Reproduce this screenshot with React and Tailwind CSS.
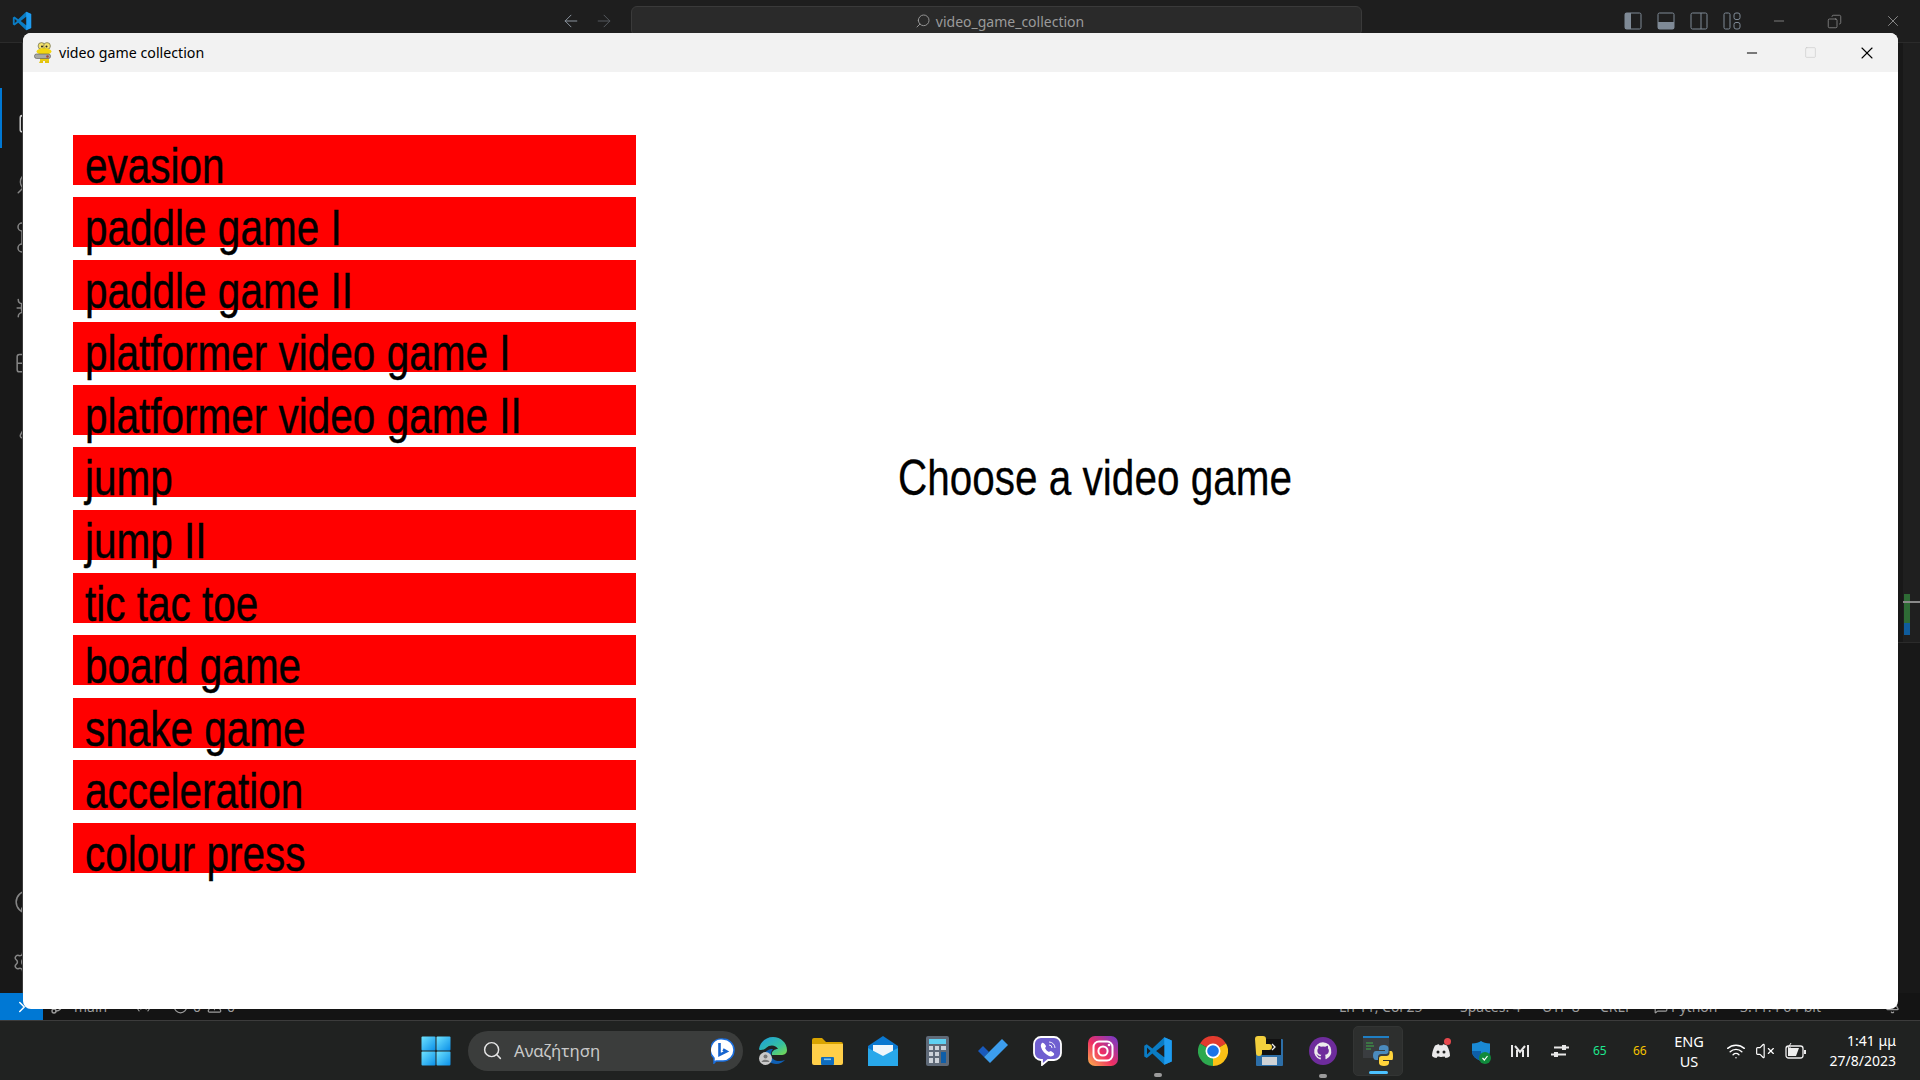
import { ArrowLeft, ArrowRight, Search, Minus, X, Square, Copy, Wifi, VolumeX, ChevronRight, GitBranch, Bell, CircleUser, Settings, Files, Bug, Blocks, FlaskConical, CircleX, TriangleAlert, Radio, MessageSquare } from 'lucide-react'

const games = [
  'evasion',
  'paddle game I',
  'paddle game II',
  'platformer video game I',
  'platformer video game II',
  'jump',
  'jump II',
  'tic tac toe',
  'board game',
  'snake game',
  'acceleration',
  'colour press',
]

function VscodeLogo({ size }) {
  return (
    <svg width={size} height={size} viewBox="0 0 24 24">
      <path d="M17 1 7.500 10 3 6.500 1 7.700v8.600L3 17.500 7.500 14l9.500 9 6-2.600V3.600z" fill="#0a7cc4" />
      <path d="M17 1 23 3.600v16.800L17 23z" fill="#1f9cf0" />
      <path d="M17 7v10l-6.500-5z" fill="#1f1f1f" />
      <path d="M3.200 9.200 6 12l-2.800 2.800z" fill="#1f1f1f" />
    </svg>
  )
}

function PygameIcon() {
  return (
    <svg width="19" height="21" viewBox="0 0 19 21">
      <circle cx="7.500" cy="4" r="3.400" fill="#f4e26b" stroke="#6a6a50" strokeWidth="0.7" />
      <circle cx="13" cy="4" r="3.400" fill="#f4e26b" stroke="#6a6a50" strokeWidth="0.7" />
      <circle cx="8" cy="4.500" r="1" fill="#222" />
      <circle cx="12.500" cy="4.500" r="1" fill="#222" />
      <ellipse cx="10" cy="9.500" rx="7.500" ry="3.300" fill="#f2d60f" />
      <path d="M6 12h9v7H6z" fill="#eacb10" />
      <rect x="0.500" y="12" width="16" height="4.500" rx="2" fill="#a9a9a2" stroke="#555" strokeWidth="0.6" />
      <circle cx="13.500" cy="14.500" r="1.300" fill="#a04b3a" />
      <path d="M6 19h3v2H5zM11 19h4v2h-4z" fill="#e2c30f" />
    </svg>
  )
}

function LayoutIcons() {
  return (
    <div className="flex items-center gap-[15px]">
      <svg width="18" height="18" viewBox="0 0 18 18"><rect x="1" y="1" width="16" height="16" rx="1.500" fill="none" stroke="#7f8a96" /><rect x="1" y="1" width="6" height="16" fill="#7f8a96" /></svg>
      <svg width="18" height="18" viewBox="0 0 18 18"><rect x="1" y="1" width="16" height="16" rx="1.500" fill="none" stroke="#7f8a96" /><rect x="1" y="10" width="16" height="7" fill="#7f8a96" /></svg>
      <svg width="18" height="18" viewBox="0 0 18 18"><rect x="1" y="1" width="16" height="16" rx="1.500" fill="none" stroke="#7f8a96" /><path d="M11 1v16" stroke="#7f8a96" /></svg>
      <svg width="18" height="18" viewBox="0 0 18 18" fill="none" stroke="#7f8a96"><rect x="1" y="1" width="6" height="16" rx="1.500" /><rect x="11" y="1" width="6" height="6.500" rx="2" /><rect x="11" y="10.500" width="6" height="6.500" rx="2" /></svg>
    </div>
  )
}

function TaskbarIcons() {
  return (
    <>
      {/* start */}
      <svg width="30" height="30" viewBox="0 0 30 30" className="ml-[421px] shrink-0">
        <defs>
          <linearGradient id="win" x1="0" y1="0" x2="1" y2="1"><stop offset="0" stopColor="#6fe3ff" /><stop offset="1" stopColor="#0a8fe8" /></linearGradient>
        </defs>
        <rect x="0.500" y="0.500" width="14" height="14" rx="1" fill="url(#win)" />
        <rect x="15.500" y="0.500" width="14" height="14" rx="1" fill="url(#win)" />
        <rect x="0.500" y="15.500" width="14" height="14" rx="1" fill="url(#win)" />
        <rect x="15.500" y="15.500" width="14" height="14" rx="1" fill="url(#win)" />
      </svg>
      {/* search */}
      <div className="ml-[17px] flex h-[40px] w-[275px] shrink-0 items-center rounded-full bg-[#3b3d3c] pl-[14px] pr-2">
        <Search size={21} strokeWidth={1.7} className="text-[#e4e4e4]" />
        <span className="ml-[11px] flex-1 text-[16.800px] text-[#c9c9c9]">Αναζήτηση</span>
        <svg width="24" height="26" viewBox="0 0 24 26">
          <path d="M12 1a11 11 0 0 1 0 22H5l-2 2v-5A11 11 0 0 1 12 1z" fill="#fff" stroke="#1a6fe0" strokeWidth="1.500" />
          <path d="M8.500 5v12l7-3.500-3.500-2" fill="none" stroke="#1765cf" strokeWidth="2.600" />
        </svg>
      </div>
      {/* edge */}
      <svg width="30" height="30" viewBox="0 0 30 30" className="ml-[15px] shrink-0">
        <defs>
          <linearGradient id="edge" x1="0" y1="0" x2="1" y2="1"><stop offset="0" stopColor="#1b9de2" /><stop offset="0.600" stopColor="#35c1a0" /><stop offset="1" stopColor="#7ddb4a" /></linearGradient>
        </defs>
        <path d="M15 1c8 0 14 6 14 13 0 4-3 5-6 5h-9c-1-3 2-6 6-6-2-4-8-5-12-1-2 2-7 3-7 1C2 6 8 1 15 1z" fill="url(#edge)" />
        <path d="M7 18c0 6 6 10 11 10 4 0 7-2 9-4-5 2-10 1-12-1-3-3-2-8 0-10-4 0-8 2-8 5z" fill="#0f5fb3" />
        <circle cx="7.500" cy="22.500" r="6.500" fill="#c9c9c9" />
        <circle cx="7.500" cy="20.500" r="2" fill="#777" />
        <path d="M3.500 26c1-3 7-3 8 0z" fill="#777" />
      </svg>
      {/* explorer */}
      <svg width="31" height="28" viewBox="0 0 31 28" className="ml-[24px] shrink-0">
        <path d="M0 3a2 2 0 0 1 2-2h8l4 4h15a2 2 0 0 1 2 2v3H0z" fill="#d9a400" />
        <path d="M0 7h31v19a2 2 0 0 1-2 2H2a2 2 0 0 1-2-2z" fill="#ffcf49" />
        <rect x="9" y="20" width="13" height="8" rx="1" fill="#0f6cbd" />
        <rect x="12" y="21.500" width="7" height="1.600" fill="#7cc4f5" />
      </svg>
      {/* mail */}
      <svg width="30" height="30" viewBox="0 0 30 30" className="ml-[25px] shrink-0">
        <path d="M15 0 30 10v20H0V10z" fill="#0a78d0" />
        <path d="M5 9h20v9l-10 5-10-5z" fill="#eef6fb" />
        <path d="M0 12 15 20 30 12v18H0z" fill="#28a8ea" />
      </svg>
      {/* calculator */}
      <svg width="23" height="30" viewBox="0 0 23 30" className="ml-[28px] shrink-0">
        <rect width="23" height="30" rx="2" fill="#5f6a78" />
        <rect x="3" y="3" width="17" height="5" fill="#5ed0f2" />
        <path d="M3 10h4v4H3zM9 10h4v4H9zM15 10h5v4h-5zM3 16h4v4H3zM9 16h4v4H9zM3 22h4v5H3zM9 22h4v5H9z" fill="#cdd3da" />
        <rect x="15" y="16" width="5" height="11" fill="#0f5ea8" />
      </svg>
      {/* todo */}
      <svg width="30" height="24" viewBox="0 0 30 24" className="ml-[29px] shrink-0">
        <path d="M0 12 5 7l6 6-5 5z" fill="#195abd" />
        <path d="M6 18 24 0l6 6-18 18z" fill="#3c9ded" />
      </svg>
      {/* viber */}
      <svg width="29" height="30" viewBox="0 0 29 30" className="ml-[25px] shrink-0">
        <path d="M8 1h13a7 7 0 0 1 7 7v9a7 7 0 0 1-7 7h-6l-6 5v-5H8a7 7 0 0 1-7-7V8a7 7 0 0 1 7-7z" fill="#6f5fd0" stroke="#fff" strokeWidth="1.800" />
        <path d="M9 7c2-1 3 2 4 3 0 1-1 2-1 2 1 2 2 3 4 4 0 0 1-1 2-1 1 1 4 2 3 4-1 1-3 2-5 1-4-2-7-5-8-9-.4-2 0-3 1-4z" fill="#fff" />
        <path d="M16 6a6 6 0 0 1 6 6M16 9a3 3 0 0 1 3 3" fill="none" stroke="#fff" strokeWidth="0.900" />
      </svg>
      {/* instagram */}
      <svg width="30" height="30" viewBox="0 0 30 30" className="ml-[26px] shrink-0">
        <defs>
          <linearGradient id="insta" x1="0" y1="1" x2="1" y2="0"><stop offset="0" stopColor="#fdb64a" /><stop offset="0.450" stopColor="#ef2f64" /><stop offset="1" stopColor="#6d3bd0" /></linearGradient>
        </defs>
        <rect width="30" height="30" rx="7" fill="url(#insta)" />
        <rect x="5.500" y="5.500" width="19" height="19" rx="5.500" fill="none" stroke="#fff" strokeWidth="2" />
        <circle cx="15" cy="15" r="4.600" fill="none" stroke="#fff" strokeWidth="2" />
        <circle cx="21" cy="9" r="1.300" fill="#fff" />
      </svg>
      {/* vscode */}
      <div className="relative ml-[25px] shrink-0">
        <VscodeLogo size={30} />
        <span className="absolute left-[11px] top-[37px] h-[4px] w-[8px] rounded-full bg-[#9b9b9b]" />
      </div>
      {/* chrome */}
      <svg width="30" height="30" viewBox="0 0 30 30" className="ml-[25px] shrink-0">
        <path d="M15 15 2 7.500A15 15 0 0 1 28 7.500z" fill="#e33b2e" />
        <path d="M15 15 28 7.500A15 15 0 0 1 15 30z" fill="#fbc116" />
        <path d="M15 15 15 30A15 15 0 0 1 2 7.500z" fill="#2da94f" />
        <circle cx="15" cy="15" r="7.500" fill="#fff" />
        <circle cx="15" cy="15" r="5.800" fill="#1a73e8" />
      </svg>
      {/* python floppy */}
      <svg width="29" height="30" viewBox="0 0 29 30" className="ml-[26px] shrink-0">
        <rect x="2" y="3" width="27" height="27" rx="1" fill="#2d6fa8" />
        <rect x="6" y="3" width="21" height="16" fill="#111" />
        <path d="M18 8l3 3-3 3" fill="none" stroke="#eee" strokeWidth="1.300" />
        <rect x="8" y="21" width="15" height="8" fill="#cfd3d6" />
        <path d="M1 3a3 3 0 0 1 3-3h5a3 3 0 0 1 3 3v5h3a2 2 0 0 1 0 6H8v3a3 3 0 0 1-6 0z" fill="#f2cf3d" />
      </svg>
      {/* github */}
      <div className="relative ml-[26px] shrink-0">
        <svg width="28" height="28" viewBox="0 0 24 24" className="block">
          <circle cx="12" cy="12" r="12" fill="#6e2c9c" />
          <path d="M12 4.500a7.600 7.600 0 0 0-2.400 14.800c.4.100.5-.2.5-.4v-1.400c-2.100.5-2.500-1-2.500-1-.4-.9-.9-1.100-.9-1.100-.7-.5 0-.5 0-.5.800.1 1.200.8 1.200.8.700 1.200 1.800.8 2.200.6.100-.5.3-.8.5-1-1.700-.2-3.400-.8-3.400-3.700 0-.8.3-1.500.8-2-.1-.2-.3-1 .1-2 0 0 .6-.2 2.100.8a7 7 0 0 1 3.800 0c1.500-1 2.100-.8 2.100-.8.400 1 .2 1.800.1 2 .5.500.8 1.200.8 2 0 2.900-1.800 3.500-3.400 3.700.3.200.5.700.5 1.300v2c0 .2.100.5.500.4A7.600 7.600 0 0 0 12 4.500z" fill="#ececec" />
        </svg>
        <span className="absolute left-[10px] top-[37px] h-[4px] w-[8px] rounded-full bg-[#9b9b9b]" />
      </div>
      {/* python idle, running */}
      <div className="relative ml-[16px] flex h-[50px] w-[50px] shrink-0 items-center justify-center rounded-[5px] border border-[#333534] bg-[#2d2f2e]">
        <svg width="30" height="30" viewBox="0 0 30 30">
          <rect y="0" width="26" height="22" fill="#3a3d40" />
          <rect y="0" width="26" height="2" fill="#1f7fc4" />
          <path d="M3 7h7M3 10h8M3 13h5" stroke="#3fae49" strokeWidth="1.200" />
          <path d="M21 9c-3 0-5 1-5 3v2h6v1h-9c-2 0-3 2-3 4.500S11 24 13 24h2v-3c0-2 1.500-3 3-3h5c1.500 0 2.500-1 2.500-2.500V12c0-2-2-3-4.500-3z" fill="#4b8bbe" />
          <path d="M21 30c3 0 5-1 5-3v-2h-6v-1h9c1 0 1-2 1-4.500S29.500 15 28 15h-1.500v2c0 2-1.500 3-3 3h-5c-1.500 0-2.500 1-2.500 2.500V27c0 2 2 3 5 3z" fill="#ffd43b" />
        </svg>
        <span className="absolute bottom-[1px] left-[15px] h-[3px] w-[19px] rounded-full bg-[#4cc2ff]" />
      </div>
    </>
  )
}

function Tray() {
  return (
    <div className="ml-auto flex items-center text-white">
      <div className="relative">
        <svg width="18" height="14" viewBox="0 0 18 14" className="block">
          <path d="M3 1.500C5 .6 6.500.3 7 .3l.4 1h3.200l.4-1c.5 0 2 .3 4 1.200C17 5 18 9 18 12c-1 1-3 2-4.500 2l-1-1.500c-4 .6-3 .6-7 0L4.500 14C3 14 1 13 0 12c0-3 1-7 3-10.500z" fill="#eaeaea" />
          <circle cx="6" cy="8" r="1.500" fill="#202221" />
          <circle cx="12" cy="8" r="1.500" fill="#202221" />
        </svg>
        <span className="absolute -right-[1px] -top-[6px] h-[7px] w-[7px] rounded-full bg-[#e5484d]" />
      </div>
      <div className="relative ml-[22px]">
        <svg width="18" height="20" viewBox="0 0 18 20" className="block">
          <path d="M9 0c2 1.500 5 2.500 9 2.500V10c0 5-4 8-9 10-5-2-9-5-9-10V2.500C4 2.500 7 1.500 9 0z" fill="#1a8ad4" />
          <path d="M0 10h9v10c-5-2-9-5-9-10z" fill="#0d5fa8" />
        </svg>
        <span className="absolute -bottom-[3px] -right-[1px] flex h-[12px] w-[12px] items-center justify-center rounded-full bg-[#108a3c]">
          <svg width="8" height="8" viewBox="0 0 8 8"><path d="M1.500 4 3.300 6 6.500 2" fill="none" stroke="#fff" strokeWidth="1.200" /></svg>
        </span>
      </div>
      <svg width="18" height="14" viewBox="0 0 18 14" className="ml-[21px]">
        <path d="M1 1v12M17 1v12" stroke="#e8e8e8" strokeWidth="2" />
        <path d="M4 2 9 8l5-6M6 6v7M12 6v7" fill="none" stroke="#e8e8e8" strokeWidth="2" />
      </svg>
      <svg width="18" height="14" viewBox="0 0 18 14" className="ml-[22px]">
        <path d="M3 3.500h15M0 10.500h15" stroke="#e8e8e8" strokeWidth="2" />
        <rect x="11" y="1" width="4" height="5" fill="#e8e8e8" />
        <rect x="3" y="8" width="4" height="5" fill="#e8e8e8" />
      </svg>
      <span className="ml-[24px] w-[15px] text-[12px] text-[#1ee88f]">65</span>
      <span className="ml-[25px] w-[15px] text-[12px] text-[#f5c400]">66</span>
      <div className="ml-[23px] flex w-[36px] flex-col items-center text-[14.500px] leading-[20px]">
        <span>ENG</span>
        <span>US</span>
      </div>
      <Wifi size={20} strokeWidth={1.7} className="ml-[19px]" />
      <VolumeX size={20} strokeWidth={1.4} className="ml-[9px]" />
      <svg width="21" height="16" viewBox="0 0 21 16" className="ml-[10px]">
        <rect x="1" y="3" width="17" height="12" rx="2.500" fill="none" stroke="#eee" strokeWidth="1.300" />
        <path d="M3 5h11l-3 8H3z" fill="#eee" />
        <rect x="19" y="7" width="2" height="4" fill="#eee" />
        <path d="M6 0 3 5h3L5 9" fill="none" stroke="#eee" />
      </svg>
      <div className="ml-[19px] mr-[24px] flex w-[71px] flex-col items-end text-[14px] leading-[20px]">
        <span>1:41 μμ</span>
        <span>27/8/2023</span>
      </div>
    </div>
  )
}

export default function App() {
  return (
    <div className="relative flex h-screen w-full flex-col overflow-hidden bg-[#1f1f1f] font-['Noto_Sans',sans-serif]">
      {/* VS Code behind */}
      <header className="flex h-[42px] shrink-0 items-center bg-[#1e1e1e]">
        <div className="ml-[12px]"><VscodeLogo size={20} /></div>
        <ArrowLeft size={20} strokeWidth={1.2} className="ml-[529px] text-[#8b949e]" />
        <ArrowRight size={20} strokeWidth={1.2} className="ml-[13px] text-[#55595e]" />
        <div className="ml-[17px] flex h-[30px] w-[731px] items-center justify-center gap-[5px] rounded-md border border-[#3a3a3a] bg-[#2a2a2a] pl-[6px] text-[14px] text-[#9a9a9a]">
          <Search size={16} strokeWidth={1.4} className="-scale-x-100" />
          video_game_collection
        </div>
        <div className="ml-[262px]"><LayoutIcons /></div>
        <Minus size={16} strokeWidth={1} className="ml-[30px] text-[#aaa]" />
        <Copy size={15} strokeWidth={1} className="ml-[40px] -scale-x-100 text-[#aaa]" />
        <X size={18} strokeWidth={1} className="ml-[42px] text-[#aaa]" />
      </header>

      <div className="flex min-h-0 flex-1 border-t border-[#2b2b2b]">
        <aside className="flex w-[23px] shrink-0 flex-col overflow-hidden border-r border-[#3a3a3a] bg-[#181818] text-[#858585]">
          <div className="mt-[45px] h-[60px] shrink-0 border-l-2 border-[#0078d4] pl-[15px] pt-[20px]">
            <Files size={26} strokeWidth={1.4} className="text-[#d0d0d0]" />
          </div>
          <Search size={26} strokeWidth={1.4} className="ml-[15px] mt-[22px] shrink-0 -scale-x-100" />
          <svg width="22" height="32" viewBox="0 0 22 32" fill="none" stroke="#858585" strokeWidth="1.500" className="ml-[16px] mt-[26px] shrink-0">
            <circle cx="6" cy="5" r="4" />
            <circle cx="6" cy="26" r="4" />
            <path d="M6 9v13" />
          </svg>
          <Bug size={26} strokeWidth={1.4} className="ml-[15px] mt-[40px] shrink-0" />
          <Blocks size={26} strokeWidth={1.4} className="ml-[15px] mt-[28px] shrink-0" />
          <FlaskConical size={26} strokeWidth={1.4} className="ml-[16px] mt-[40px] shrink-0" />
          <CircleUser size={26} strokeWidth={1.4} className="ml-[14px] mt-auto shrink-0" />
          <Settings size={26} strokeWidth={1.4} className="mb-[18px] ml-[12px] mt-[34px] shrink-0" />
        </aside>
        <main className="flex-1" />
        <div className="flex w-[22px] shrink-0 flex-col bg-[#1f1f1f]">
          <div className="relative h-[599px] border-l-[5px] border-[#181818]">
            <div className="absolute bottom-[7px] left-px h-[41px] w-[6px] bg-gradient-to-b from-[#2e6b35] from-70% to-[#0f5c9c] to-70%" />
            <div className="absolute bottom-[39px] left-0 h-[2px] w-[17px] bg-[#8a8a8a]" />
          </div>
          <div className="flex-1 border-t border-[#2b2b2b] bg-[#181818]" />
        </div>
      </div>

      <footer className="flex h-[27px] shrink-0 items-center whitespace-nowrap bg-[#141414] text-[14px] text-[#9d9d9d]">
        <div className="flex h-full w-[43px] items-center justify-center bg-[#0078d4]">
          <ChevronRight size={18} className="text-white" />
        </div>
        <GitBranch size={16} className="ml-[7px]" />
        <span className="ml-[8px] w-[36px]">main</span>
        <Radio size={15} className="ml-[26px]" />
        <CircleX size={15} className="ml-[22px]" />
        <span className="ml-[5px] w-[8px]">0</span>
        <TriangleAlert size={15} className="ml-[6px]" />
        <span className="ml-[5px] w-[8px]">0</span>
        <span className="ml-[1104px] w-[101px]">Ln 11, Col 25</span>
        <span className="ml-[20px] w-[62px]">Spaces: 4</span>
        <span className="ml-[20px] w-[42px]">UTF-8</span>
        <span className="ml-[16px] w-[31px]">CRLF</span>
        <MessageSquare size={14} className="ml-[23px]" />
        <span className="ml-[3px] w-[48px]">Python</span>
        <span className="ml-[21px] w-[82px]">3.11.4 64-bit</span>
        <Bell size={15} className="ml-auto mr-[20px]" />
      </footer>

      <nav className="flex h-[60px] shrink-0 items-center border-t border-[#3c3c3c] bg-[#202221]">
        <TaskbarIcons />
        <Tray />
      </nav>

      {/* pygame window */}
      <section className="absolute left-[23px] top-[33px] flex h-[976px] w-[1875px] flex-col overflow-hidden rounded-lg bg-white">
        <div className="flex h-[39px] shrink-0 items-center bg-[#f2f2f2] pl-[11px] text-black">
          <PygameIcon />
          <span className="ml-[6px] text-[14.200px]">video game collection</span>
          <Minus size={16} strokeWidth={1.5} className="ml-auto" />
          <Square size={13} strokeWidth={1} className="ml-[44px] text-[#c4c4c4]" />
          <X size={20} strokeWidth={1.3} className="ml-[40px] mr-[21px]" />
        </div>
        <div className="flex flex-1 pl-[50px] pt-[62.700px] font-['Liberation_Sans',sans-serif] text-black">
          <ul className="flex w-[563px] shrink-0 flex-col gap-[12.550px]">
            {games.map((name) => (
              <li key={name} className="h-[50px] whitespace-nowrap bg-[#ff0000] pl-[12px] text-[50px] leading-[62px]">
                <span className="inline-block origin-left scale-x-[0.81] [-webkit-text-stroke:0.4px_black]">{name}</span>
              </li>
            ))}
          </ul>
          <h1 className="ml-[262px] mt-[312.600px] whitespace-nowrap text-[50px] leading-[62px] font-normal">
            <span className="inline-block origin-left scale-x-[0.81] [-webkit-text-stroke:0.3px_black]">Choose a video game</span>
          </h1>
        </div>
      </section>
    </div>
  )
}
